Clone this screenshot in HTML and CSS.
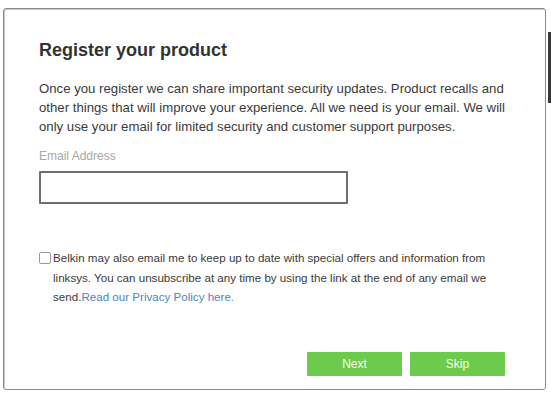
FILE: index.html
```html
<!DOCTYPE html>
<html>
<head>
<meta charset="utf-8">
<link rel="stylesheet" href="styles.css">
</head>
<body>
<div class="page">
  <div class="modal">
    <h1 class="title">Register your product</h1>
    <p class="intro">Once you register we can share important security updates. Product recalls and other things that will improve your experience. All we need is your email. We will only use your email for limited security and customer support purposes.</p>
    <label class="field-label" for="email">Email Address</label>
    <input class="email" id="email" type="text">
    <div class="consent">
      <span class="box"></span>
      <p class="consent-text">Belkin may also email me to keep up to date with special offers and information from linksys. You can unsubscribe at any time by using the link at the end of any email we send.<a class="link" href="#">Read our Privacy Policy here.</a></p>
    </div>
    <div class="actions">
      <button class="btn">Next</button>
      <button class="btn">Skip</button>
    </div>
  </div>
  <div class="scroll-thumb"></div>
</div>
<div class="below">Advanced Properties</div>
</body>
</html>
```

FILE: styles.css
```css
html, body {
  margin: 0;
  padding: 0;
  background: #fff;
  overflow: hidden;
  font-family: "Liberation Sans", Arial, sans-serif;
  color: #333;
}
.page {
  display: flex;
  align-items: flex-start;
  padding-top: 8px;
  padding-left: 3px;
}
.modal {
  box-sizing: border-box;
  width: 543px;
  height: 382px;
  border: 1px solid #8a8a8a;
  border-radius: 3px;
  padding: 0 0 0 35px;
  display: flex;
  flex-direction: column;
  box-shadow: inset 1px 1px 0 #c8c8c8;
}
.title {
  margin: 30px 0 0 0;
  font-size: 18px;
  font-weight: bold;
  color: #333;
  line-height: 22px;
}
.intro {
  margin: 18px 0 0 0;
  font-size: 13.2px;
  line-height: 19px;
  width: 480px;
  color: #3a3a3a;
}
.field-label {
  margin-top: 13px;
  font-size: 12px;
  line-height: 14px;
  color: #a8a8a8;
}
.email {
  box-sizing: border-box;
  margin-top: 8px;
  width: 309px;
  height: 33px;
  border: 2px solid #6e6e6e;
  border-radius: 1px;
  background: #fff;
  outline: none;
}
.consent {
  margin-top: 44px;
  display: flex;
  align-items: flex-start;
}
.box {
  flex: none;
  box-sizing: border-box;
  width: 12px;
  height: 12px;
  border: 1px solid #9a9a9a;
  border-radius: 2px;
  margin: 4px 2px 0 0;
}
.consent-text {
  margin: 0;
  font-size: 11.6px;
  line-height: 19.5px;
  width: 440px;
  color: #3a3a3a;
}
.consent-text .link {
  color: #4a86c0;
  text-decoration: none;
}
.actions {
  margin-top: auto;
  margin-bottom: 13px;
  align-self: flex-end;
  margin-right: 40px;
  display: flex;
  gap: 8px;
}
.btn {
  width: 95px;
  height: 24px;
  border: none;
  border-radius: 1px;
  background: #6ccb4c;
  color: #f4fff0;
  font-family: "Liberation Sans", Arial, sans-serif;
  font-size: 12px;
  padding: 0;
}
.scroll-thumb {
  margin-top: 24px;
  margin-left: 2px;
  width: 3px;
  height: 71px;
  background: #3a3a3a;
}
.below {
  margin-top: 1px;
  padding-left: 42px;
  font-size: 14px;
  font-weight: bold;
  color: #444;
}
```
